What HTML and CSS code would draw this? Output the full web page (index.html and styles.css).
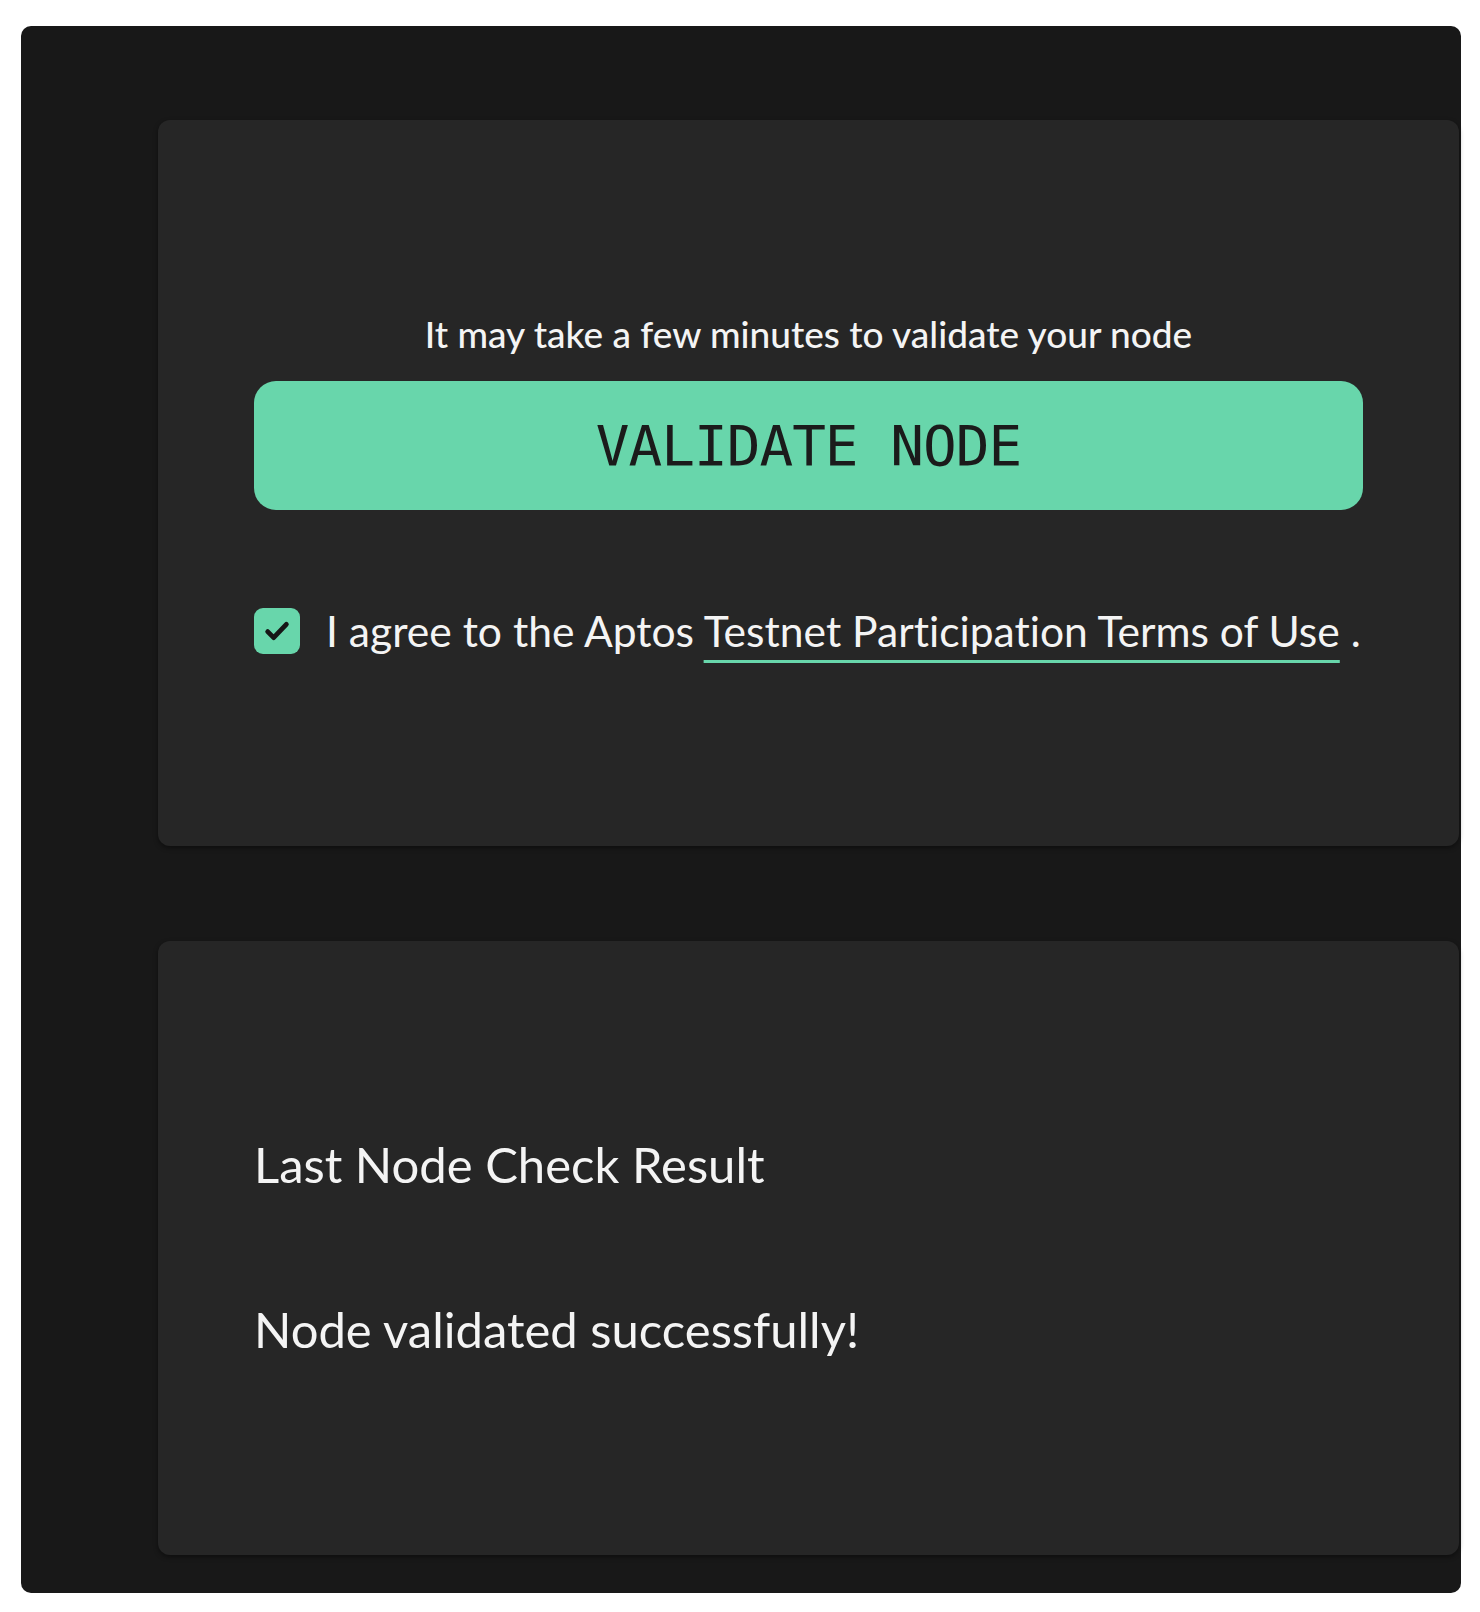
FILE: index.html
```html
<!DOCTYPE html>
<html lang="en">
<head>
    <meta charset="UTF-8">
    <meta name="viewport" content="width=device-width, initial-scale=1.0">
    <title>Validate Node</title>
    <link rel="stylesheet" href="styles.css">
</head>
<body>

    <div class="frame">

        <!-- Validation card -->
        <section class="card card-validate">
            <p class="hint">It may take a few minutes to validate your node</p>
            <button type="button" class="validate-btn">VALIDATE NODE</button>

            <label class="agree">
                <span class="checkbox">
                    <svg viewBox="0 0 24 24" width="32" height="32">
                        <path d="M5 12.5l4.5 4.5L19 7" fill="none" stroke="#161616" stroke-width="3.6" stroke-linecap="round" stroke-linejoin="round"/>
                    </svg>
                </span>
                <span class="agree-text">I agree to the Aptos <a href="#" class="terms">Testnet Participation Terms of Use</a> .</span>
            </label>
        </section>

        <!-- Result card -->
        <section class="card card-result">
            <h2 class="result-title">Last Node Check Result</h2>
            <p class="result-text">Node validated successfully!</p>
        </section>

    </div>

</body>
</html>
```

FILE: styles.css
```css
body {
    margin: 0;
    background-color: #fff;
    font-family: Lato, "Open Sans", sans-serif;
    font-variant-ligatures: no-common-ligatures;
    color: #f4f4f4;
}

.frame {
    box-sizing: border-box;
    width: 1440px;
    height: 1567px;
    margin: 26px 0 0 21px;
    padding: 94px 2px 38px 137px;
    background-color: #181818;
    border-radius: 10px;
    display: flex;
    flex-direction: column;
    gap: 95px;
}

.card {
    background-color: #262626;
    border-radius: 12px;
    box-shadow: 0 2px 5px rgba(0, 0, 0, 0.45);
    padding: 0 96px;
}

.card-validate {
    height: 726px;
    box-sizing: border-box;
    padding-top: 196px;
    display: flex;
    flex-direction: column;
}

.hint {
    margin: 0;
    text-align: center;
    font-size: 37px;
    line-height: 36px;
    font-weight: 500;
}

.validate-btn {
    margin-top: 29px;
    height: 129px;
    border: none;
    border-radius: 22px;
    background-color: #68d6ab;
    color: #1b1b1b;
    font-family: "DejaVu Sans Mono", "Liberation Mono", monospace;
    font-size: 56px;
    letter-spacing: -1px;
    cursor: pointer;
}

.agree {
    margin-top: 95px;
    display: flex;
    align-items: center;
    gap: 26px;
    font-size: 42.6px;
    font-weight: 400;
}

.checkbox {
    flex: none;
    width: 46px;
    height: 46px;
    border-radius: 9px;
    background-color: #68d6ab;
    display: flex;
    align-items: center;
    justify-content: center;
}

.terms {
    color: inherit;
    text-decoration: underline;
    text-decoration-color: #68d6ab;
    text-decoration-thickness: 3px;
    text-underline-offset: 13px;
}

.card-result {
    flex: 1;
    padding-top: 194px;
}

.result-title,
.result-text {
    margin: 0;
    font-size: 49px;
    line-height: 1.2;
    font-weight: 400;
}

.result-text {
    margin-top: 106px;
}
```
